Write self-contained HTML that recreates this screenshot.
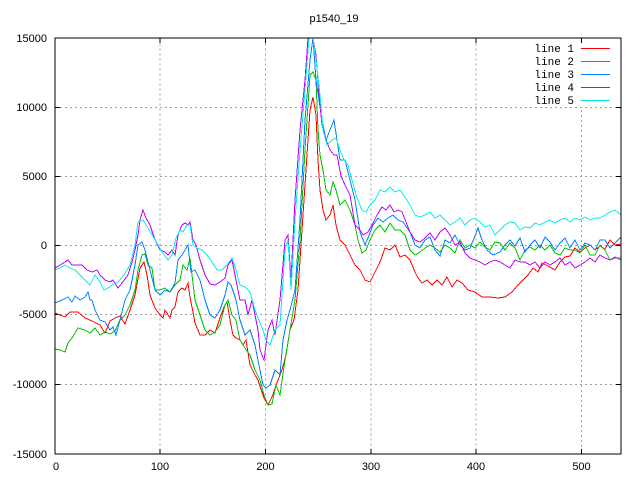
<!DOCTYPE html>
<html><head><meta charset="utf-8"><style>
html,body{margin:0;padding:0;background:#fff;}
svg{display:block;}
text{font-family:"Liberation Sans",sans-serif;font-size:11px;fill:#000;}
polyline{fill:none;stroke-width:1;shape-rendering:crispEdges;}
</style></head><body>
<svg width="640" height="480" viewBox="0 0 640 480" xmlns="http://www.w3.org/2000/svg">
<rect width="640" height="480" fill="#fff"/>
<g stroke="#a0a0a0" stroke-width="1" stroke-dasharray="2,3">
<line x1="160" y1="38.5" x2="160" y2="454"/>
<line x1="265.5" y1="38.5" x2="265.5" y2="454"/>
<line x1="371" y1="38.5" x2="371" y2="454"/>
<line x1="476" y1="38.5" x2="476" y2="454"/>
<line x1="581.5" y1="110" x2="581.5" y2="454"/>
<line x1="55" y1="107.5" x2="621" y2="107.5"/>
<line x1="55" y1="176.5" x2="621" y2="176.5"/>
<line x1="55" y1="245.5" x2="621" y2="245.5"/>
<line x1="55" y1="314.5" x2="621" y2="314.5"/>
<line x1="55" y1="384.5" x2="621" y2="384.5"/>
</g>
<g stroke="#000" stroke-width="1">
<line x1="55" y1="107.5" x2="60" y2="107.5"/><line x1="616" y1="107.5" x2="621" y2="107.5"/>
<line x1="55" y1="176.5" x2="60" y2="176.5"/><line x1="616" y1="176.5" x2="621" y2="176.5"/>
<line x1="55" y1="245.5" x2="60" y2="245.5"/><line x1="616" y1="245.5" x2="621" y2="245.5"/>
<line x1="55" y1="314.5" x2="60" y2="314.5"/><line x1="616" y1="314.5" x2="621" y2="314.5"/>
<line x1="55" y1="384.5" x2="60" y2="384.5"/><line x1="616" y1="384.5" x2="621" y2="384.5"/>
<line x1="160" y1="38" x2="160" y2="43"/><line x1="160" y1="449" x2="160" y2="454"/>
<line x1="265.5" y1="38" x2="265.5" y2="43"/><line x1="265.5" y1="449" x2="265.5" y2="454"/>
<line x1="371" y1="38" x2="371" y2="43"/><line x1="371" y1="449" x2="371" y2="454"/>
<line x1="476" y1="38" x2="476" y2="43"/><line x1="476" y1="449" x2="476" y2="454"/>
<line x1="581.5" y1="38" x2="581.5" y2="43"/><line x1="581.5" y1="449" x2="581.5" y2="454"/>
</g>
<polyline stroke="#ff0000" points="55,313 65,317 70,312 78,312 85,318 92,321 100,325 105,333 110,321 115,318 120,316 125,324 130,310 135,295 140,268 144,262 147,275 150,295 155,308 160,315 163,318 165,310 170,318 172,310 175,307 178,292 182,288 185,290 188,283 190,297 192,307 195,323 200,335 205,335 210,330 215,333 220,318 224,307 227,302 230,320 233,335 236,338 240,340 243,345 246,340 250,365 255,375 258,380 262,392 264,398 268,405 272,397 278,380 282,370 286,355 290,330 294,320 298,290 302,230 306,170 310,110 313,97 316,115 318,160 320,190 323,210 326,220 330,215 333,205 336,225 340,240 345,245 350,255 355,265 360,270 365,280 370,282 375,272 380,262 385,248 390,250 395,245 400,257 405,255 410,260 415,272 418,278 422,283 427,280 432,285 437,280 442,285 447,277 452,287 457,280 462,283 468,290 475,292 482,297 490,297 498,298 505,297 512,292 518,285 523,280 528,275 533,268 538,272 542,263 548,266 555,270 560,262 565,257 570,256 575,248 580,252 585,248 590,245 595,250 600,246 605,249 610,240 615,245 621,244"/>
<polyline stroke="#00c000" points="55,349 60,350 65,352 68,343 72,338 78,328 85,330 90,333 95,328 100,335 105,332 110,334 115,331 120,320 125,315 130,305 135,290 138,270 142,255 145,254 148,265 152,268 155,290 160,290 165,288 170,292 175,285 180,280 183,265 187,270 190,258 192,275 195,300 200,315 205,330 210,335 215,332 220,325 225,305 228,300 232,315 236,320 240,340 245,348 250,355 255,370 260,380 264,395 268,405 272,404 276,385 280,395 285,360 290,330 295,300 300,240 305,150 310,75 313,72 316,80 318,130 320,155 323,170 326,190 330,195 333,182 336,190 340,205 345,200 350,210 355,225 358,240 362,253 366,250 370,240 375,230 380,225 385,232 390,223 395,230 400,230 405,235 410,250 415,255 420,252 425,248 430,245 435,248 440,252 445,245 450,248 455,253 460,240 465,248 470,245 475,248 480,242 485,247 490,250 495,242 500,243 505,250 510,243 515,248 520,260 525,250 530,247 535,250 540,245 545,250 550,245 555,253 560,255 565,248 570,250 575,250 580,253 585,245 590,255 595,255 600,245 605,250 610,260 615,258 621,258"/>
<polyline stroke="#0080ff" points="55,303 62,300 68,297 72,302 75,296 80,300 85,297 88,292 90,300 92,300 95,310 100,320 105,322 110,330 113,327 116,335 120,320 125,300 130,290 135,265 138,245 142,242 145,250 150,270 155,290 160,295 165,290 170,292 175,283 178,260 182,255 185,250 188,245 191,272 195,270 200,280 205,300 210,315 215,318 220,310 225,295 228,282 231,285 236,300 240,320 245,335 250,330 255,345 260,370 263,385 266,388 270,385 275,370 280,375 283,340 287,320 290,310 295,290 300,220 305,120 310,60 313,38 316,80 319,100 322,120 326,140 330,130 334,120 337,140 340,160 345,160 350,180 355,200 360,232 365,245 368,238 373,225 378,218 383,222 388,218 393,215 398,220 403,222 410,232 415,245 420,248 425,240 430,237 435,250 440,256 445,240 450,243 455,235 460,245 465,250 470,248 475,236 478,228 482,240 487,250 493,255 500,252 505,245 510,240 515,246 520,238 525,252 530,245 535,240 540,248 545,237 550,242 555,250 560,243 565,238 570,248 575,240 580,250 585,243 590,245 595,250 600,240 605,240 610,248 615,243 621,237"/>
<polyline stroke="#c000ff" points="55,268 60,265 65,262 68,260 72,265 77,265 82,265 87,270 92,272 97,270 100,275 105,280 110,282 113,280 118,288 122,283 128,275 132,262 135,250 138,235 140,220 143,210 146,218 150,225 155,240 160,250 165,252 168,255 172,250 175,255 178,235 182,225 185,223 188,225 190,222 193,240 196,245 200,260 205,275 210,284 215,285 220,282 225,278 228,265 232,260 236,280 240,300 245,300 248,315 252,300 258,330 260,350 264,360 268,330 272,320 275,335 280,300 285,240 288,235 291,280 295,200 300,130 305,80 308,38 313,38 316,55 319,95 322,125 326,140 330,150 334,155 337,155 341,176 345,185 350,195 355,225 360,230 363,235 368,232 372,225 377,215 382,207 386,210 390,205 394,212 398,210 402,212 406,222 410,232 415,240 420,242 425,238 430,233 435,240 440,232 445,228 450,235 455,245 460,242 465,253 470,258 475,260 480,262 485,265 490,262 495,260 500,262 505,265 510,268 515,260 520,262 525,262 530,265 535,262 540,268 545,262 550,265 555,262 560,258 565,265 570,262 575,268 580,265 585,262 590,258 595,262 600,255 605,258 610,260 615,257 621,260"/>
<polyline stroke="#00eeee" points="55,270 60,268 65,265 70,268 75,270 80,275 85,280 90,285 95,275 100,282 104,290 108,288 112,285 118,282 124,275 130,265 135,245 138,222 143,220 148,228 152,235 157,243 162,252 168,260 172,255 176,238 180,230 183,232 187,225 190,225 193,245 197,248 202,250 207,255 212,262 217,270 222,270 227,265 232,258 236,270 240,285 245,287 250,292 255,310 260,323 263,330 266,340 270,345 275,330 280,325 285,250 288,240 291,290 295,220 300,150 305,90 309,38 313,38 316,60 320,95 323,130 327,145 332,140 336,138 340,150 344,160 348,165 352,180 357,198 362,210 366,212 370,205 375,200 380,190 385,192 390,187 395,192 400,190 405,197 410,205 415,215 420,217 425,215 430,212 435,218 440,215 445,220 450,225 455,222 460,218 465,225 470,220 475,218 480,222 485,227 490,225 495,235 500,230 505,225 510,222 515,223 520,230 525,227 530,228 535,223 540,225 545,222 550,220 555,223 560,220 565,218 570,222 575,218 580,220 585,217 590,220 595,218 600,218 605,215 610,212 615,210 621,215"/>
<rect x="55" y="38" width="566" height="416" fill="none" stroke="#000" stroke-width="1"/>
<g stroke-width="1">
<line x1="581" y1="48.5" x2="610" y2="48.5" stroke="#ff0000"/>
<line x1="581" y1="61.5" x2="610" y2="61.5" stroke="#00c000"/>
<line x1="581" y1="74.5" x2="610" y2="74.5" stroke="#0080ff"/>
<line x1="581" y1="87.5" x2="610" y2="87.5" stroke="#c000ff"/>
<line x1="581" y1="100.5" x2="610" y2="100.5" stroke="#00eeee"/>
</g>
<g text-anchor="end">
<text x="574" y="52" style="font-family:'Liberation Mono',monospace">line 1</text>
<text x="574" y="65" style="font-family:'Liberation Mono',monospace">line 2</text>
<text x="574" y="78" style="font-family:'Liberation Mono',monospace">line 3</text>
<text x="574" y="91" style="font-family:'Liberation Mono',monospace">line 4</text>
<text x="574" y="104" style="font-family:'Liberation Mono',monospace">line 5</text>
</g>
<text x="334" y="22" text-anchor="middle">p1540_19</text>
<g text-anchor="end">
<text x="47" y="42">15000</text>
<text x="47" y="111">10000</text>
<text x="47" y="180">5000</text>
<text x="47" y="249">0</text>
<text x="47" y="318">-5000</text>
<text x="47" y="388">-10000</text>
<text x="47" y="458">-15000</text>
</g>
<g text-anchor="middle">
<text x="56" y="470">0</text>
<text x="160" y="470">100</text>
<text x="265.5" y="470">200</text>
<text x="371" y="470">300</text>
<text x="476" y="470">400</text>
<text x="581.5" y="470">500</text>
</g>
</svg>
</body></html>
